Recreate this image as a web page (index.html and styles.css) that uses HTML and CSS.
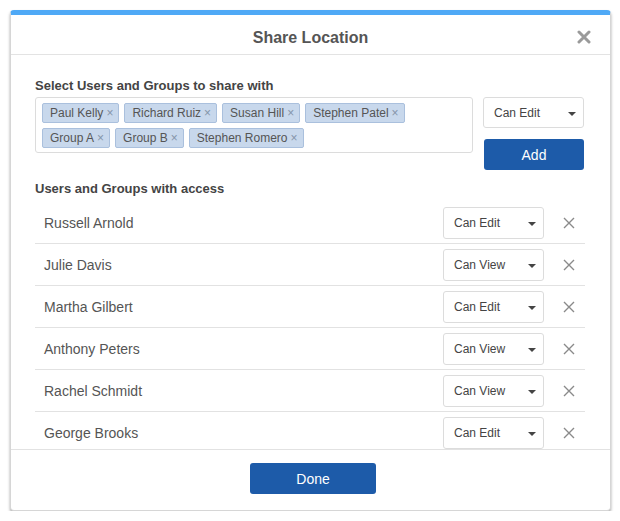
FILE: index.html
```html
<!DOCTYPE html>
<html>
<head>
<meta charset="utf-8">
<link rel="stylesheet" href="styles.css">
</head>
<body>
<div class="dialog">
  <div class="header">
    <span class="title">Share Location</span>
    <span class="close"><svg width="14" height="14" viewBox="0 0 14 14"><path d="M2 2L12 12M12 2L2 12" stroke="#9a9a9a" stroke-width="3" stroke-linecap="round"/></svg></span>
  </div>
  <div class="body">
    <div class="label">Select Users and Groups to share with</div>
    <div class="pick-row">
      <div class="tagbox">
        <span class="tag">Paul Kelly<span class="tx">×</span></span>
        <span class="tag">Richard Ruiz<span class="tx">×</span></span>
        <span class="tag">Susan Hill<span class="tx">×</span></span>
        <span class="tag">Stephen Patel<span class="tx">×</span></span>
        <span class="tag">Group A<span class="tx">×</span></span>
        <span class="tag">Group B<span class="tx">×</span></span>
        <span class="tag">Stephen Romero<span class="tx">×</span></span>
      </div>
      <div class="side">
        <div class="select"><span>Can Edit</span><span class="caret"></span></div>
        <button class="btn add">Add</button>
      </div>
    </div>
    <div class="label label2">Users and Groups with access</div>
    <div class="list">
      <div class="row"><span class="name">Russell Arnold</span><div class="select"><span>Can Edit</span><span class="caret"></span></div><span class="rm"><svg width="12" height="12" viewBox="0 0 12 12"><path d="M1 1L11 11M11 1L1 11" stroke="#8a8a8a" stroke-width="1.4"/></svg></span></div>
      <div class="row"><span class="name">Julie Davis</span><div class="select"><span>Can View</span><span class="caret"></span></div><span class="rm"><svg width="12" height="12" viewBox="0 0 12 12"><path d="M1 1L11 11M11 1L1 11" stroke="#8a8a8a" stroke-width="1.4"/></svg></span></div>
      <div class="row"><span class="name">Martha Gilbert</span><div class="select"><span>Can Edit</span><span class="caret"></span></div><span class="rm"><svg width="12" height="12" viewBox="0 0 12 12"><path d="M1 1L11 11M11 1L1 11" stroke="#8a8a8a" stroke-width="1.4"/></svg></span></div>
      <div class="row"><span class="name">Anthony Peters</span><div class="select"><span>Can View</span><span class="caret"></span></div><span class="rm"><svg width="12" height="12" viewBox="0 0 12 12"><path d="M1 1L11 11M11 1L1 11" stroke="#8a8a8a" stroke-width="1.4"/></svg></span></div>
      <div class="row"><span class="name">Rachel Schmidt</span><div class="select"><span>Can View</span><span class="caret"></span></div><span class="rm"><svg width="12" height="12" viewBox="0 0 12 12"><path d="M1 1L11 11M11 1L1 11" stroke="#8a8a8a" stroke-width="1.4"/></svg></span></div>
      <div class="row"><span class="name">George Brooks</span><div class="select"><span>Can Edit</span><span class="caret"></span></div><span class="rm"><svg width="12" height="12" viewBox="0 0 12 12"><path d="M1 1L11 11M11 1L1 11" stroke="#8a8a8a" stroke-width="1.4"/></svg></span></div>
    </div>
  </div>
  <div class="footer">
    <button class="btn done">Done</button>
  </div>
</div>
</body>
</html>
```
FILE: styles.css
```css
* { box-sizing: border-box; }
body {
  margin: 0;
  background: #fff;
  font-family: "Liberation Sans", Arial, sans-serif;
  color: #555;
}
.dialog {
  margin: 10px 0 0 10px;
  width: 601px;
  height: 501px;
  border: 1px solid #d6d6d6;
  border-top: 5px solid #4fa9f6;
  border-radius: 4px;
  background: #fff;
  box-shadow: 0 2px 3px rgba(0,0,0,0.35);
  display: flex;
  flex-direction: column;
  overflow: hidden;
}
.header {
  position: relative;
  height: 40px;
  border-bottom: 1px solid #e3e3e3;
  display: flex;
  align-items: center;
  justify-content: center;
  flex: none;
}
.title {
  font-size: 16px;
  font-weight: bold;
  color: #555;
  margin-top: 6px;
}
.close {
  position: absolute;
  right: 19px;
  top: 15px;
  display: flex;
}
.body {
  flex: 1;
  overflow: hidden;
  padding: 23px 25px 0 24px;
}
.label {
  font-size: 13px;
  font-weight: bold;
  color: #444;
  line-height: 16px;
  margin-bottom: 3px;
}
.label2 {
  margin-top: 11px;
  margin-bottom: 5px;
}
.pick-row {
  display: flex;
  gap: 10px;
}
.tagbox {
  flex: 1;
  height: 56px;
  border: 1px solid #dcdcdc;
  border-radius: 3px;
  padding: 5px 6px;
  display: flex;
  flex-wrap: wrap;
  align-content: flex-start;
  gap: 5px 5px;
}
.tag {
  height: 20px;
  line-height: 18px;
  font-size: 12px;
  color: #555;
  background: #c8d8ec;
  border: 1px solid #aac0dd;
  border-radius: 2px;
  padding: 0 5px 0 7px;
  display: inline-flex;
  align-items: center;
}
.tx {
  color: #8595aa;
  font-size: 12px;
  margin-left: 3px;
}
.side {
  width: 102px;
  display: flex;
  flex-direction: column;
  gap: 11px;
}
.select {
  width: 101px;
  height: 31px;
  border: 1px solid #dcdcdc;
  border-radius: 3px;
  background: #fff;
  display: flex;
  align-items: center;
  justify-content: space-between;
  padding: 0 7px 0 10px;
  font-size: 12px;
  color: #444;
}
.caret {
  width: 0;
  height: 0;
  border-left: 4px solid transparent;
  border-right: 4px solid transparent;
  border-top: 4px solid #444;
  margin-top: 2px;
}
.btn {
  border: none;
  border-radius: 3px;
  background: #1d5ba9;
  color: #fff;
  font-family: "Liberation Sans", Arial, sans-serif;
  font-size: 14px;
  height: 31px;
  padding: 0;
}
.add {
  width: 100px;
  margin-left: 1px;
}
.list {
  display: flex;
  flex-direction: column;
}
.row {
  height: 42px;
  border-bottom: 1px solid #e2e2e2;
  display: flex;
  align-items: center;
  flex: none;
}
.name {
  flex: 1;
  padding-left: 9px;
  font-size: 14px;
  color: #555;
}
.row .select {
  height: 32px;
}
.rm {
  width: 41px;
  display: flex;
  justify-content: flex-start;
  padding-left: 19px;
}
.footer {
  flex: none;
  height: 61px;
  border-top: 1px solid #e2e2e2;
  display: flex;
  justify-content: center;
  padding-top: 13px;
}
.done {
  width: 126px;
  margin-left: 5px;
}
```
